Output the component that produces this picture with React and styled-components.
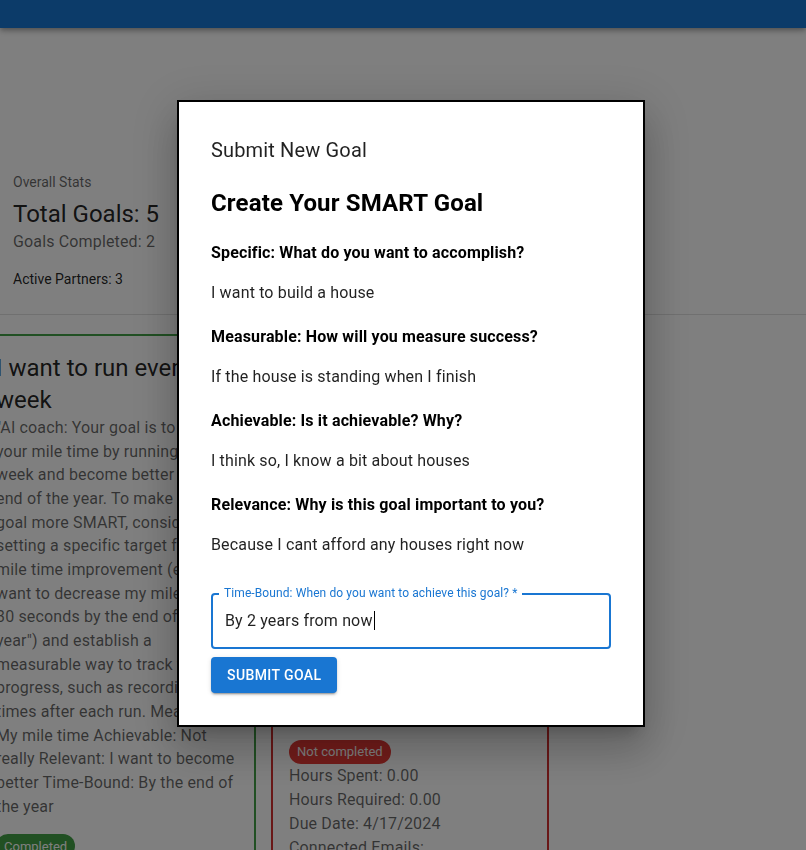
import React from 'react'
import styled, { createGlobalStyle } from 'styled-components'

const GlobalStyle = createGlobalStyle`
  html, body {
    margin: 0;
    padding: 0;
    height: 100%;
    overflow: hidden;
  }
  body {
    font-family: Roboto, "Noto Sans", Arial, sans-serif;
    background: #fff;
    color: rgba(0, 0, 0, 0.87);
  }
`

const Page = styled.div`
  width: 100%;
  min-height: 850px;
`

const AppBar = styled.header`
  height: 28px;
  background: #1976d2;
  box-shadow: 0 2px 4px -1px rgba(0,0,0,0.2), 0 4px 5px 0 rgba(0,0,0,0.14), 0 1px 10px 0 rgba(0,0,0,0.12);
`

const Stats = styled.section`
  padding: 144px 13px 0;
`

const Overline = styled.div`
  font-size: 14px;
  line-height: 20px;
  color: rgba(0, 0, 0, 0.6);
`

const Total = styled.div`
  margin-top: 6px;
  font-size: 24px;
  line-height: 32px;
`

const Completed = styled.div`
  font-size: 16px;
  line-height: 24px;
  color: rgba(0, 0, 0, 0.6);
  letter-spacing: 0.15px;
`

const Partners = styled.div`
  margin-top: 15px;
  font-size: 14px;
  line-height: 20px;
`

const Divider = styled.hr`
  margin: 25px 0 0;
  border: 0;
  border-top: 1px solid rgba(0, 0, 0, 0.12);
`

const CardRow = styled.div`
  display: flex;
  align-items: flex-start;
  gap: 15px;
  margin: 19px 0 0 -22px;
`

const GoalCard = styled.article`
  flex: 0 0 278px;
  box-sizing: border-box;
  border: 2px solid ${p => (p.$done ? '#43a047' : '#d32f2f')};
  border-radius: 4px;
  padding: 16px 14px 16px 16px;
  background: #fff;
`

const CardTitle = styled.h5`
  margin: 0;
  font-size: 24px;
  line-height: 32px;
  font-weight: 400;
`

const Body = styled.p`
  margin: 0;
  font-size: 16px;
  line-height: 1.48;
  letter-spacing: 0.15px;
  color: rgba(0, 0, 0, 0.6);
`

const Chip = styled.span`
  display: inline-flex;
  align-items: center;
  height: 24px;
  margin-top: 16px;
  padding: 0 8px;
  border-radius: 12px;
  font-size: 13px;
  color: #fff;
  background: ${p => (p.$done ? '#43a047' : '#e53935')};
`

const Info = styled.div`
  font-size: 16px;
  line-height: 24px;
  letter-spacing: 0.15px;
  color: rgba(0, 0, 0, 0.6);
`

const Backdrop = styled.div`
  position: fixed;
  inset: 0;
  background: rgba(0, 0, 0, 0.5);
`

const Modal = styled.div`
  position: fixed;
  left: 177px;
  top: 100px;
  width: 400px;
  padding: 32px;
  border: 2px solid #000;
  background: #fff;
  box-shadow: 0 11px 15px -7px rgba(0,0,0,0.2), 0 24px 38px 3px rgba(0,0,0,0.14), 0 9px 46px 8px rgba(0,0,0,0.12);
`

const ModalTitle = styled.h6`
  margin: 0;
  font-size: 20px;
  line-height: 32px;
  font-weight: 400;
  letter-spacing: 0.15px;
`

const Heading = styled.h2`
  margin: 23px 0 0;
  font-size: 24px;
  line-height: 28px;
  font-weight: 700;
  letter-spacing: 0.15px;
  color: #000;
`

const Question = styled.div`
  margin-top: ${p => (p.$first ? '24px' : '20px')};
  font-size: 16px;
  line-height: 24px;
  font-weight: 700;
  letter-spacing: 0.15px;
  color: #000;
`

const Answer = styled.p`
  margin: 16px 0 0;
  font-size: 16px;
  line-height: 24px;
  letter-spacing: 0.15px;
`

const Field = styled.div`
  position: relative;
  box-sizing: border-box;
  height: 56px;
  margin-top: 36px;
  padding: 0 12px;
  display: flex;
  align-items: center;
  border: 2px solid #1976d2;
  border-radius: 4px;
`

const FieldLabel = styled.label`
  position: absolute;
  left: 6px;
  top: -10px;
  padding: 0 5px;
  background: #fff;
  font-size: 12px;
  line-height: 16px;
  letter-spacing: 0.1px;
  color: #1976d2;
`

const FieldValue = styled.span`
  font-size: 16px;
  line-height: 24px;
  letter-spacing: 0.15px;
`

const Caret = styled.span`
  display: inline-block;
  width: 1px;
  height: 19px;
  margin-left: 1px;
  vertical-align: -4px;
  background: #000;
`

const SubmitButton = styled.button`
  display: block;
  margin-top: 8px;
  height: 36px;
  padding: 6px 16px;
  border: 0;
  border-radius: 4px;
  background: #1976d2;
  color: #fff;
  font-family: inherit;
  font-size: 14px;
  font-weight: 500;
  letter-spacing: 0.4px;
  text-transform: uppercase;
  box-shadow: 0 3px 1px -2px rgba(0,0,0,0.2), 0 2px 2px 0 rgba(0,0,0,0.14), 0 1px 5px 0 rgba(0,0,0,0.12);
`

const questions = [
  ['Specific: What do you want to accomplish?', 'I want to build a house'],
  ['Measurable: How will you measure success?', 'If the house is standing when I finish'],
  ['Achievable: Is it achievable? Why?', 'I think so, I know a bit about houses'],
  ['Relevance: Why is this goal important to you?', 'Because I cant afford any houses right now'],
]

export default function App() {
  return (
    <>
      <GlobalStyle />
      <Page>
        <AppBar />
        <Stats>
          <Overline>Overall Stats</Overline>
          <Total>Total Goals: 5</Total>
          <Completed>Goals Completed: 2</Completed>
          <Partners>Active Partners: 3</Partners>
        </Stats>
        <Divider />
        <CardRow>
          <GoalCard $done>
            <CardTitle>I want to run every week</CardTitle>
            <Body>
              "AI coach: Your goal is to improve your mile time by running every week and become better by the
              end of the year. To make your goal more SMART, consider setting a specific target for your mile
              time improvement (e.g., "I want to decrease my mile time by 30 seconds by the end of the
              year") and establish a measurable way to track your progress, such as recording your times after
              each run. Measurable: My mile time Achievable: Not really Relevant: I want to become better
              Time-Bound: By the end of the year
            </Body>
            <Chip $done>Completed</Chip>
            <Info>Hours Spent: 12.00</Info>
            <Info>Hours Required: 10.00</Info>
          </GoalCard>
          <GoalCard>
            <CardTitle>Learn to play the guitar this summer</CardTitle>
            <Body>
              AI coach: Your goal is to learn to play the guitar. To make this goal more SMART, consider
              choosing a specific song you want to be able to play, setting aside a fixed amount of practice
              time each week, and tracking your progress by recording yourself every month so you can hear how
              you improve. Measurable: Play three songs Achievable: Yes Relevant: I enjoy music Time-Bound: By
              the summer
            </Body>
            <Chip>Not completed</Chip>
            <Info>Hours Spent: 0.00</Info>
            <Info>Hours Required: 0.00</Info>
            <Info>Due Date: 4/17/2024</Info>
            <Info>Connected Emails:</Info>
          </GoalCard>
        </CardRow>
      </Page>
      <Backdrop />
      <Modal>
        <ModalTitle>Submit New Goal</ModalTitle>
        <Heading>Create Your SMART Goal</Heading>
        {questions.map(([q, a], i) => (
          <React.Fragment key={q}>
            <Question $first={i === 0}>{q}</Question>
            <Answer>{a}</Answer>
          </React.Fragment>
        ))}
        <Field>
          <FieldLabel>Time-Bound: When do you want to achieve this goal? *</FieldLabel>
          <FieldValue>By 2 years from now<Caret /></FieldValue>
        </Field>
        <SubmitButton>Submit Goal</SubmitButton>
      </Modal>
    </>
  )
}
